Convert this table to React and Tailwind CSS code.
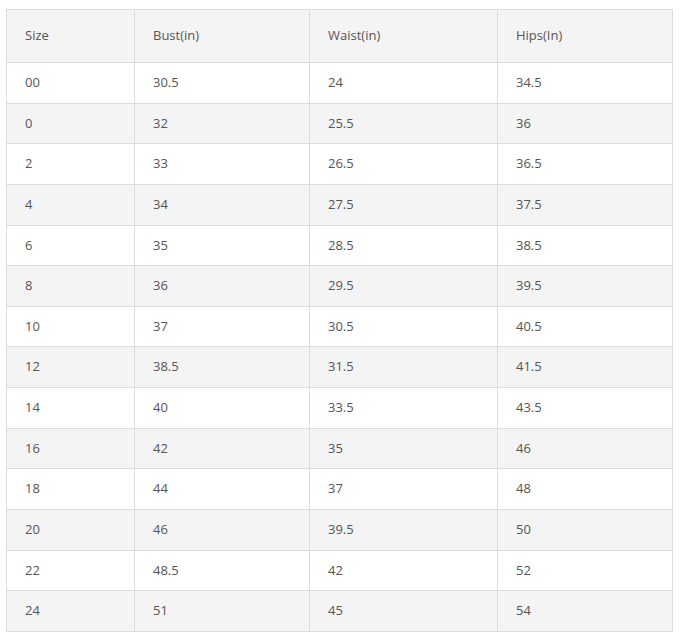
const HEAD = ['Size', 'Bust(in)', 'Waist(in)', 'Hips(In)']

const ROWS = [
  ['00', '30.5', '24', '34.5'],
  ['0', '32', '25.5', '36'],
  ['2', '33', '26.5', '36.5'],
  ['4', '34', '27.5', '37.5'],
  ['6', '35', '28.5', '38.5'],
  ['8', '36', '29.5', '39.5'],
  ['10', '37', '30.5', '40.5'],
  ['12', '38.5', '31.5', '41.5'],
  ['14', '40', '33.5', '43.5'],
  ['16', '42', '35', '46'],
  ['18', '44', '37', '48'],
  ['20', '46', '39.5', '50'],
  ['22', '48.5', '42', '52'],
  ['24', '51', '45', '54'],
]

export default function App() {
  return (
    <div className="bg-white w-[682px] h-[639px] pt-[9px] pl-[6px]" style={{ fontFamily: '"Open Sans", sans-serif' }}>
      <table className="border-collapse w-[666px] text-[13px] text-[#555] table-fixed">
        <colgroup>
          <col className="w-[128px]" />
          <col className="w-[175px]" />
          <col className="w-[188px]" />
          <col className="w-[175px]" />
        </colgroup>
        <thead>
          <tr className="h-[53px] bg-[#f4f4f4]">
            {HEAD.map(h => (
              <th key={h} className="border border-[#dcdcdc] pl-[18px] text-left font-normal align-middle">{h}</th>
            ))}
          </tr>
        </thead>
        <tbody>
          {ROWS.map((r, i) => (
            <tr key={i} className={`h-[40.64px] ${i % 2 ? 'bg-[#f4f4f4]' : 'bg-white'}`}>
              {r.map((c, j) => (
                <td key={j} className="border border-[#dcdcdc] pl-[18px] align-middle">{c}</td>
              ))}
            </tr>
          ))}
        </tbody>
      </table>
    </div>
  )
}
